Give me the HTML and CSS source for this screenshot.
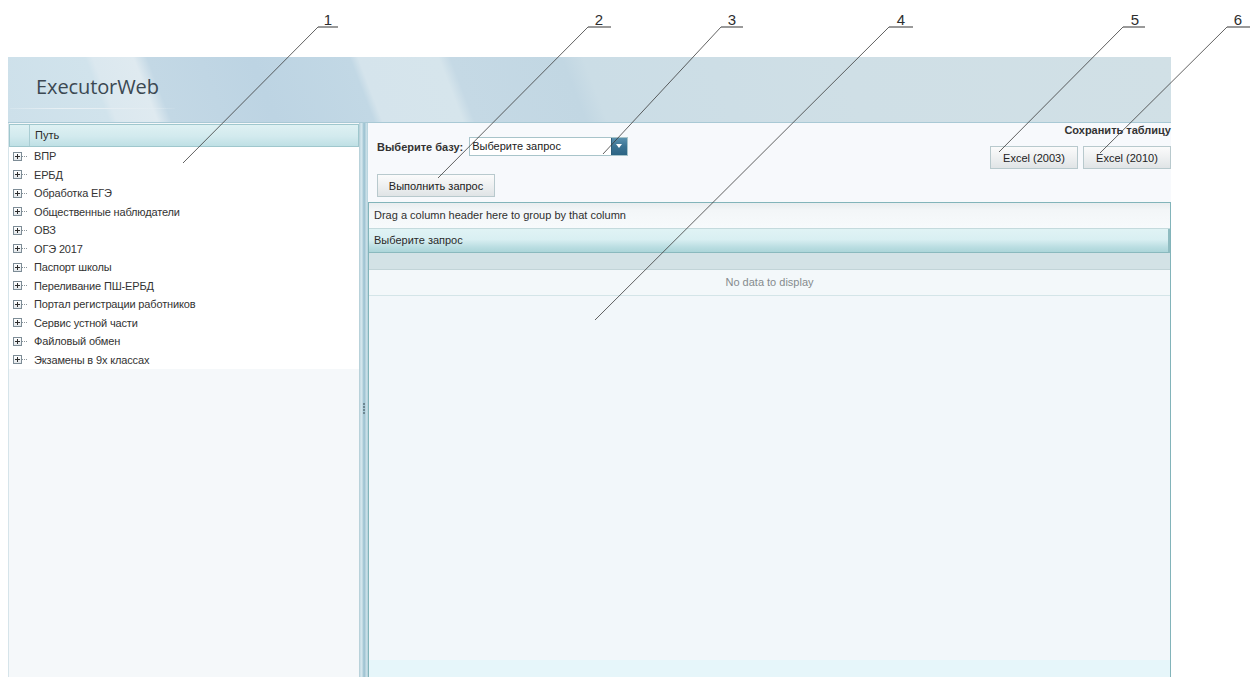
FILE: index.html
```html
<!DOCTYPE html>
<html lang="ru">
<head>
<meta charset="utf-8">
<title>ExecutorWeb</title>
<link rel="stylesheet" href="styles.css">
</head>
<body>
<div class="app">
  <header class="masthead">
    <span class="brand">ExecutorWeb</span>
    <span class="brand-rule"></span>
  </header>

  <div class="workspace">
    <aside class="nav-panel">
      <div class="nav-head">
        <span class="nav-indicator"></span>
        <span class="nav-title">Путь</span>
      </div>
      <ul class="tree">
        <li class="node"><span class="expander"></span><span class="connector"></span><span class="label">ВПР</span></li>
        <li class="node"><span class="expander"></span><span class="connector"></span><span class="label">ЕРБД</span></li>
        <li class="node"><span class="expander"></span><span class="connector"></span><span class="label">Обработка ЕГЭ</span></li>
        <li class="node"><span class="expander"></span><span class="connector"></span><span class="label">Общественные наблюдатели</span></li>
        <li class="node"><span class="expander"></span><span class="connector"></span><span class="label">ОВЗ</span></li>
        <li class="node"><span class="expander"></span><span class="connector"></span><span class="label">ОГЭ 2017</span></li>
        <li class="node"><span class="expander"></span><span class="connector"></span><span class="label">Паспорт школы</span></li>
        <li class="node"><span class="expander"></span><span class="connector"></span><span class="label">Переливание ПШ-ЕРБД</span></li>
        <li class="node"><span class="expander"></span><span class="connector"></span><span class="label">Портал регистрации работников</span></li>
        <li class="node"><span class="expander"></span><span class="connector"></span><span class="label">Сервис устной части</span></li>
        <li class="node"><span class="expander"></span><span class="connector"></span><span class="label">Файловый обмен</span></li>
        <li class="node"><span class="expander"></span><span class="connector"></span><span class="label">Экзамены в 9х классах</span></li>
      </ul>
    </aside>

    <div class="splitter"><span class="grip"></span></div>

    <main class="content">
      <div class="toolbar">
        <div class="query-controls">
          <div class="base-row">
            <span class="field-label">Выберите базу:</span>
            <div class="combo">
              <span class="combo-text">Выберите запрос</span>
              <span class="combo-button"></span>
            </div>
          </div>
          <button class="btn btn-run" type="button">Выполнить запрос</button>
        </div>
        <div class="export">
          <span class="export-title">Сохранить таблицу</span>
          <div class="export-buttons">
            <button class="btn btn-excel" type="button">Excel (2003)</button>
            <button class="btn btn-excel" type="button">Excel (2010)</button>
          </div>
        </div>
      </div>

      <div class="grid">
        <div class="group-panel">Drag a column header here to group by that column</div>
        <div class="grid-header">Выберите запрос</div>
        <div class="filter-row"></div>
        <div class="empty-row">No data to display</div>
        <div class="grid-body"></div>
        <div class="grid-footer"></div>
      </div>
    </main>
  </div>
</div>

<svg class="callouts" width="1251" height="677" viewBox="0 0 1251 677">
  <g class="leaders">
    <line x1="318" y1="27" x2="183" y2="163"/>
    <line x1="588" y1="27" x2="438" y2="178"/>
    <line x1="721" y1="27" x2="603" y2="154"/>
    <line x1="889" y1="27" x2="595" y2="320"/>
    <line x1="1123" y1="27" x2="999" y2="152"/>
    <line x1="1227" y1="27" x2="1100" y2="153"/>
  </g>
  <g class="shelves">
    <line x1="318" y1="27" x2="338" y2="27"/>
    <line x1="588" y1="27" x2="611" y2="27"/>
    <line x1="721" y1="27" x2="743" y2="27"/>
    <line x1="889" y1="27" x2="913" y2="27"/>
    <line x1="1123" y1="27" x2="1145" y2="27"/>
    <line x1="1227" y1="27" x2="1250" y2="27"/>
  </g>
  <g class="numbers">
    <text x="328" y="25">1</text>
    <text x="599" y="25">2</text>
    <text x="732" y="25">3</text>
    <text x="901" y="25">4</text>
    <text x="1135" y="25">5</text>
    <text x="1238" y="25">6</text>
  </g>
</svg>
</body>
</html>
```
FILE: styles.css
```css
* {
  box-sizing: border-box;
}

html, body {
  margin: 0;
  padding: 0;
  background: #ffffff;
}

body {
  position: relative;
  width: 1251px;
  height: 677px;
  overflow: hidden;
  font-family: "Liberation Sans", Arial, sans-serif;
  font-size: 11px;
  color: #2b2b2b;
}

/* application frame */
.app {
  margin: 57px 0 0 8px;
  width: 1163px;
  height: 620px;
  display: flex;
  flex-direction: column;
}

/* header band with diagonal light stripes */
.masthead {
  position: relative;
  height: 66px;
  flex: none;
  border-bottom: 1px solid #a9c9d5;
  background:
    linear-gradient(69deg,
      #cde0ea 0px,
      #d1e3ec 95px,
      #dbe8ef 102px,
      #dfeaf0 140px,
      #c3d8e5 153px,
      #bdd4e3 250px,
      #c2d8e5 342px,
      #d5e4ec 350px,
      #d6e5ec 425px,
      #c5d9e5 436px,
      #c2d7e3 540px,
      #cbdde6 560px,
      #cfdfe6 800px,
      #d1e0e6 1109px);
}

.brand {
  position: absolute;
  left: 28px;
  top: 16px;
  font-family: "Open Sans", "Liberation Sans", sans-serif;
  font-size: 20px;
  letter-spacing: -0.1px;
  color: #3b4852;
}

.brand-rule {
  position: absolute;
  left: 2px;
  top: 51px;
  width: 165px;
  height: 1px;
  background: linear-gradient(90deg, rgba(240, 246, 249, 0.2), #e8f0f4 30%, #e4edf2 70%, rgba(232, 240, 244, 0.1));
}

.workspace {
  flex: 1;
  display: flex;
  min-height: 0;
}

/* left navigation tree */
.nav-panel {
  width: 352px;
  flex: none;
  display: flex;
  flex-direction: column;
  background: #f5f8fa;
  border-left: 1px solid #d6e4ea;
  border-right: 1px solid #b9d2da;
}

.nav-head {
  margin-top: 1px;
  height: 23px;
  display: flex;
  background: linear-gradient(#def1f3, #d2eaee 55%, #bfe0e5);
  border: 1px solid #9fc7cd;
}

.nav-indicator {
  width: 20px;
  border-right: 1px solid #a9cdd3;
}

.nav-title {
  padding-left: 5px;
  line-height: 20px;
  color: #2a2a2a;
}

.tree {
  list-style: none;
  margin: 0;
  padding: 0;
  background: #ffffff;
}

.node {
  height: 18.5px;
  display: flex;
  align-items: center;
}

.expander {
  position: relative;
  margin-left: 4px;
  width: 9px;
  height: 9px;
  border: 1px solid #7d8c96;
  background: linear-gradient(#ffffff, #e4e8eb);
}

.expander::before,
.expander::after {
  content: "";
  position: absolute;
  background: #2d2d2d;
}

.expander::before {
  left: 1px;
  top: 3px;
  width: 5px;
  height: 1px;
}

.expander::after {
  left: 3px;
  top: 1px;
  width: 1px;
  height: 5px;
}

.connector {
  width: 5px;
  height: 1px;
  border-top: 1px dotted #8a949a;
  margin-right: 7px;
}

.label {
  color: #333333;
  white-space: nowrap;
  letter-spacing: -0.15px;
}

/* vertical splitter between panes */
.splitter {
  position: relative;
  width: 8px;
  flex: none;
  background: linear-gradient(90deg, #c4dbe4 0, #d8e9ef 2px, #aacbd8 3px, #9ec3d2 5px, #cfe3ea 6px, #b4d1dc 8px);
}

.grip {
  position: absolute;
  left: 3px;
  top: 280px;
  width: 2px;
  height: 12px;
  background: repeating-linear-gradient(#6d8792 0 2px, transparent 2px 3px);
}

/* right working area */
.content {
  flex: 1;
  display: flex;
  flex-direction: column;
  background: #f7f9fc;
  min-width: 0;
}

.toolbar {
  height: 74px;
  flex: none;
  display: flex;
  justify-content: space-between;
}

.query-controls {
  padding: 14px 0 0 9px;
  display: flex;
  flex-direction: column;
  align-items: flex-start;
}

.base-row {
  height: 19px;
  display: flex;
  align-items: center;
  margin-bottom: 18px;
}

.field-label {
  font-weight: bold;
  color: #333333;
  margin-right: 6px;
}

.combo {
  width: 159px;
  height: 19px;
  display: flex;
  border: 1px solid #a8c4ca;
  background: #ffffff;
}

.combo-text {
  flex: 1;
  padding-left: 2px;
  line-height: 17px;
  color: #222222;
}

.combo-button {
  position: relative;
  width: 16px;
  background: linear-gradient(#5b92af, #3b7393 50%, #2c6484);
  border-left: 1px solid #2d5e7a;
}

.combo-button::after {
  content: "";
  position: absolute;
  left: 4px;
  top: 6px;
  border-left: 3.5px solid transparent;
  border-right: 3.5px solid transparent;
  border-top: 4px solid #ffffff;
}

.btn {
  font-family: inherit;
  font-size: 11px;
  color: #222222;
  height: 23px;
  padding: 0;
  border: 1px solid #b8c9cd;
  background: linear-gradient(#fbfbfb, #eef0f1 50%, #e0e4e6);
  cursor: pointer;
}

.btn-run {
  width: 118px;
}

.export {
  display: flex;
  flex-direction: column;
  align-items: flex-end;
}

.export-title {
  margin-top: 1px;
  line-height: 13px;
  font-weight: bold;
  color: #333333;
}

.export-buttons {
  margin-top: 9px;
  display: flex;
  gap: 5px;
}

.btn-excel {
  width: 88px;
}

/* data grid */
.grid {
  margin-top: 5px;
  flex: 1;
  display: flex;
  flex-direction: column;
  border: 1px solid #82b4ba;
  border-bottom: none;
  background: #f2f7fa;
}

.group-panel {
  height: 26px;
  flex: none;
  padding-left: 5px;
  line-height: 25px;
  color: #2f2f2f;
  background: linear-gradient(#e9edef, #f3f6f8 30%, #f7fafc);
  border-bottom: 1px solid #c4dadd;
}

.grid-header {
  height: 24px;
  flex: none;
  padding-left: 5px;
  line-height: 23px;
  color: #2a2a2a;
  background: linear-gradient(#e0f3f5, #d9eff2 45%, #b9dde1 80%, #acd5d9);
  border-bottom: 1px solid #8ab9be;
  border-right: 2px solid #8fbcc1;
}

.filter-row {
  height: 17px;
  flex: none;
  background: #d3e2e6;
  border-bottom: 1px solid #c2d4d8;
}

.empty-row {
  height: 26px;
  flex: none;
  text-align: center;
  line-height: 25px;
  color: #858b8e;
  background: #f3f8fa;
  border-bottom: 1px solid #d4e5e8;
}

.grid-body {
  flex: 1;
}

.grid-footer {
  height: 17px;
  flex: none;
  background: #e6f6fa;
}

/* numbered callouts drawn over the page */
.callouts {
  position: absolute;
  left: 0;
  top: 0;
  pointer-events: none;
}

.leaders line {
  stroke: #3a3a3a;
  stroke-width: 0.8;
}

.shelves line {
  stroke: #808080;
  stroke-width: 1.6;
}

.numbers text {
  font-family: "Liberation Sans", Arial, sans-serif;
  font-size: 15px;
  fill: #2e2e2e;
  text-anchor: middle;
}
```
